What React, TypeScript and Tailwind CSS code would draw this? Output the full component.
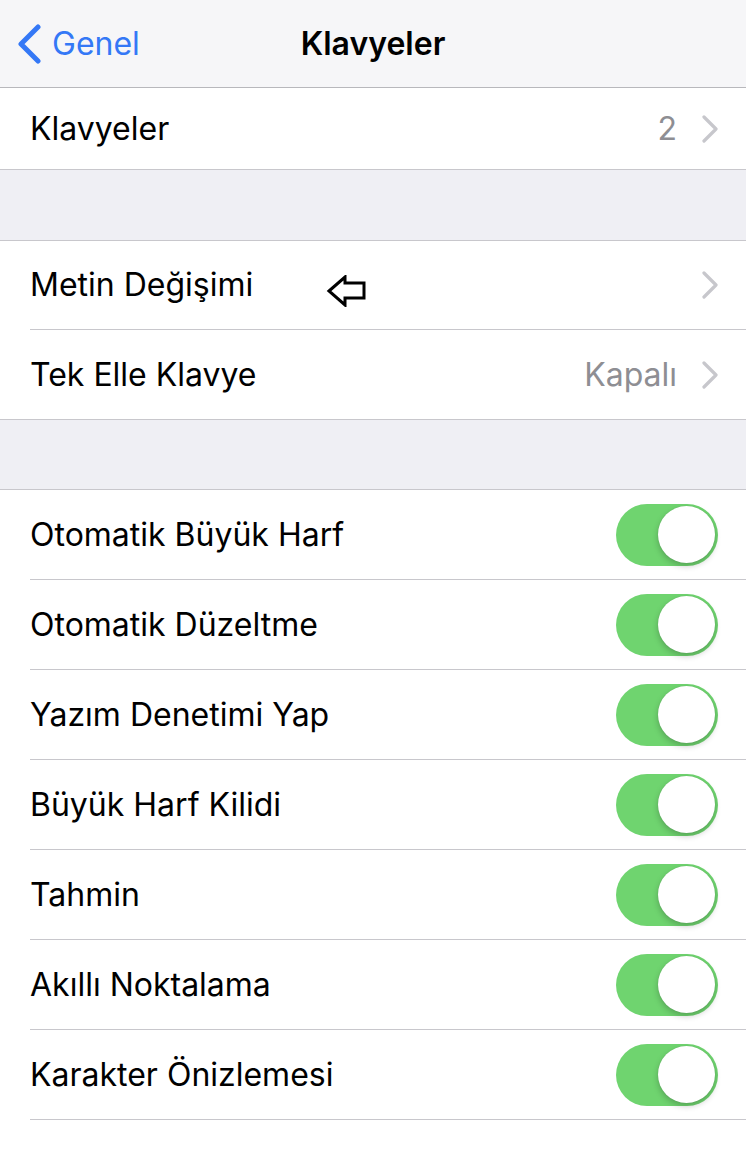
import React from "react";

const toggles = [
  "Otomatik Büyük Harf",
  "Otomatik Düzeltme",
  "Yazım Denetimi Yap",
  "Büyük Harf Kilidi",
  "Tahmin",
  "Akıllı Noktalama",
  "Karakter Önizlemesi",
];

function Chevron() {
  return (
    <svg width="18" height="28" viewBox="0 0 18 28" fill="none" stroke="#c7c7cc" strokeWidth="3.2" strokeLinecap="round" strokeLinejoin="round">
      <polyline points="3,2 15,14 3,26" />
    </svg>
  );
}

function Toggle() {
  return (
    <div className="w-[102px] h-[62px] rounded-full bg-[#6fd46f] flex items-center justify-end pr-[3px]">
      <div className="w-[57px] h-[57px] rounded-full bg-white shadow-[0_3px_6px_rgba(0,0,0,0.22),0_0_1px_rgba(0,0,0,0.15)]" />
    </div>
  );
}

function LinkRow({ label, value, last, arrow }: { label: string; value?: string; last?: boolean; arrow?: boolean }) {
  return (
    <div className="pl-[30px] bg-white">
      <div className={`relative h-[89px] flex items-center pr-[27px] ${last ? "" : "border-b border-[#c8c7cc]"}`}>
        <span className="flex-1 text-[32px] text-black">{label}</span>
        {value && <span className="text-[32px] text-[#8e8e93] mr-[24px]">{value}</span>}
        <Chevron />
        {arrow && (
          <svg className="absolute left-[296px] top-[34px]" width="42" height="32" viewBox="0 0 42 32" fill="white" stroke="black" strokeWidth="3" strokeLinejoin="miter">
            <polygon points="3,16 19,2 19,8 38,8 38,23 19,23 19,30" />
          </svg>
        )}
      </div>
    </div>
  );
}

export default function App() {
  return (
    <div className="w-[746px] h-[1154px] bg-white overflow-hidden" style={{ fontFamily: "Inter, 'Noto Sans', sans-serif" }}>
      {/* nav bar */}
      <div className="relative h-[88px] bg-[#f6f6f8] border-b border-[#b8b8bc] flex items-center justify-center">
        <div className="absolute left-[16px] top-0 h-full flex items-center gap-[10px] text-[#3478f6]">
          <svg width="26" height="40" viewBox="0 0 26 40" fill="none" stroke="currentColor" strokeWidth="5" strokeLinecap="round" strokeLinejoin="round">
            <polyline points="22,3 5,20 22,37" />
          </svg>
          <span className="text-[32px]">Genel</span>
        </div>
        <span className="text-[32px] font-semibold text-black">Klavyeler</span>
      </div>

      <div className="bg-white h-[82px] flex items-center pl-[30px] pr-[27px] border-b border-[#c8c7cc]">
        <span className="flex-1 text-[32px] text-black">Klavyeler</span>
        <span className="text-[32px] text-[#8e8e93] mr-[24px]">2</span>
        <Chevron />
      </div>

      <div className="h-[71px] bg-[#efeff4] border-b border-[#c8c7cc]" />

      <LinkRow label="Metin Değişimi" arrow />
      <div className="border-b border-[#c8c7cc]">
        <LinkRow label="Tek Elle Klavye" value="Kapalı" last />
      </div>

      <div className="h-[70px] bg-[#efeff4] border-b border-[#c8c7cc]" />

      {toggles.map((t) => (
        <div key={t} className="pl-[30px] bg-white">
          <div className="h-[90px] flex items-center pr-[28px] border-b border-[#c8c7cc]">
            <span className="flex-1 text-[32px] text-black">{t}</span>
            <Toggle />
          </div>
        </div>
      ))}
    </div>
  );
}
